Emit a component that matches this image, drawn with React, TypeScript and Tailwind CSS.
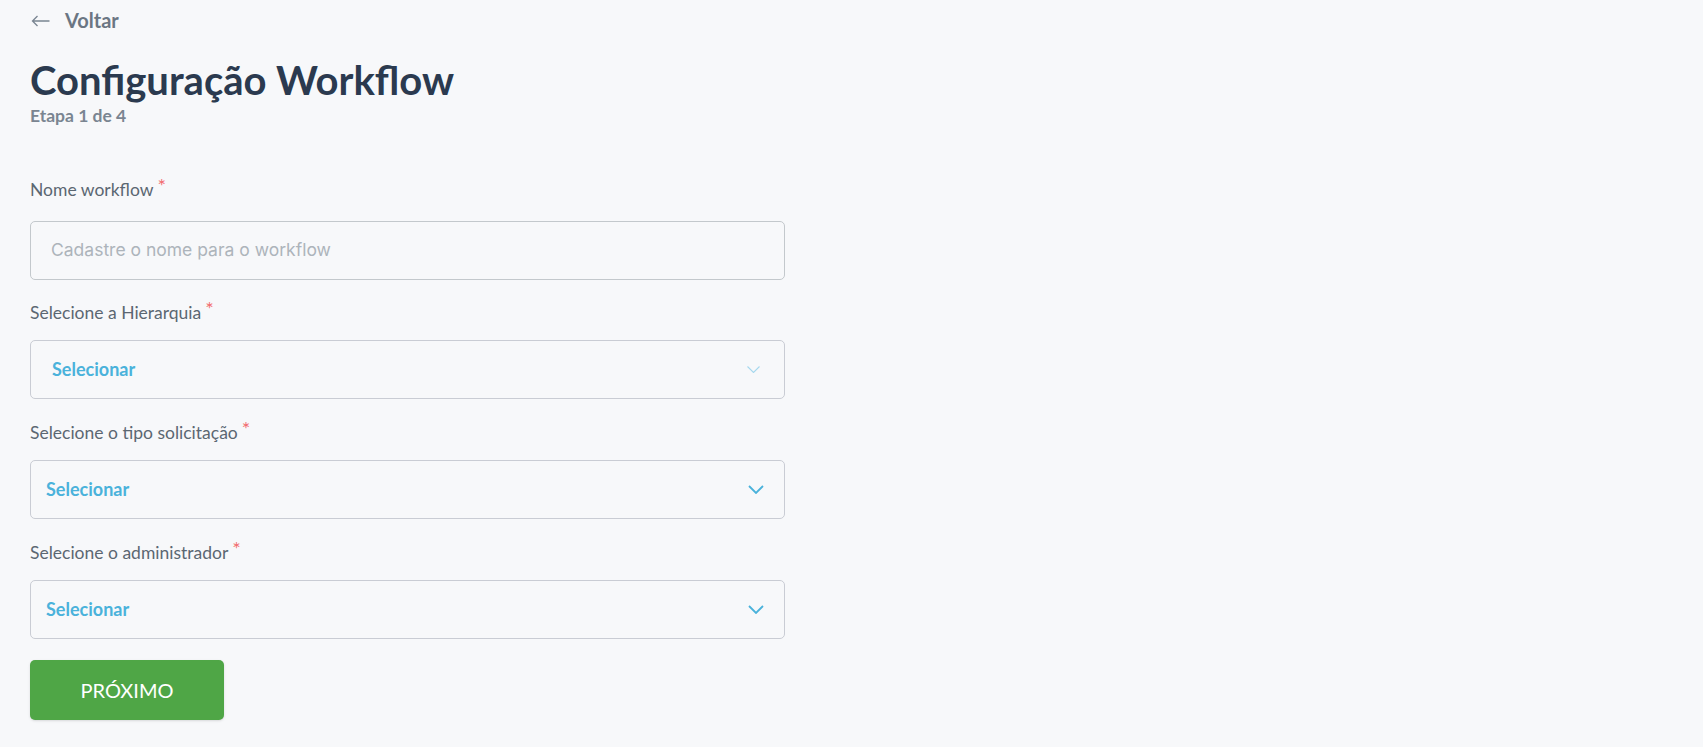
import React from 'react';

const FONT = "font-['Lato','Liberation_Sans',sans-serif]";

const Label = ({ children, className = '' }: { children: React.ReactNode; className?: string }) => (
  <div className={`flex items-start ${className}`}>
    <span className="text-[17.5px] leading-[21px] text-[#5b6772]">{children}</span>
    <span className="relative -top-[4px] ml-[4px] text-[20px] leading-[20px] text-[#f26b6e]">*</span>
  </div>
);

const Chevron = ({ faded }: { faded?: boolean }) =>
  faded ? (
    <svg width="13" height="7" viewBox="0 0 13 7" fill="none">
      <path d="M0.5 0.5l6 6 6-6" stroke="#a6d8ee" strokeWidth="1.1" />
    </svg>
  ) : (
    <svg width="16" height="9" viewBox="0 0 16 9" fill="none">
      <path d="M1 1l7 7 7-7" stroke="#4ab2db" strokeWidth="1.8" />
    </svg>
  );

const Select = ({ first }: { first?: boolean }) => (
  <div
    className={`mt-[17px] h-[59px] w-[755px] rounded-[5px] border border-[#c9ccd4] flex items-center justify-between ${
      first ? 'pl-[21px] pr-[24px]' : 'pl-[15px] pr-[20px]'
    }`}
  >
    <span className="text-[18px] font-bold text-[#4ab2db]">Selecionar</span>
    <Chevron faded={first} />
  </div>
);

export default function App() {
  return (
    <div className={`min-h-screen bg-[#f7f8fa] ${FONT} pl-[30px] pb-[27px]`}>
      <div className="pt-[8px] h-[32px] flex items-start">
        <svg width="19" height="12" viewBox="0 0 19 12" fill="none" className="ml-[1px] mt-[7px]">
          <path d="M18.5 6H1.5M6.5 1L1.5 6l5 5" stroke="#7a8591" strokeWidth="1.3" />
        </svg>
        <span className="ml-[15px] text-[20px] leading-[24px] font-bold text-[#6b7683]">Voltar</span>
      </div>

      <h1 className="mt-[24px] text-[40px] leading-[48px] font-bold text-[#2b3a4f]">
        Configuração Workflow
      </h1>
      <div className="mt-[1px] text-[17.5px] leading-[22px] font-bold text-[#7a8591]">Etapa 1 de 4</div>

      <Label className="mt-[52px]">Nome workflow</Label>
      <div className="mt-[21px] h-[59px] w-[755px] rounded-[5px] border border-[#c3c8cc] flex items-center pl-[20px]">
        <span className="font-['Inter',sans-serif] text-[17.5px] text-[#adb4bb]">
          Cadastre o nome para o workflow
        </span>
      </div>

      <Label className="mt-[22px]">Selecione a Hierarquia</Label>
      <Select first />

      <Label className="mt-[23px]">Selecione o tipo solicitação</Label>
      <Select />

      <Label className="mt-[23px]">Selecione o administrador</Label>
      <Select />

      <button className="mt-[21px] h-[60px] w-[194px] rounded-[5px] bg-[#4fa646] text-white text-[20px] shadow-sm">
        PRÓXIMO
      </button>
    </div>
  );
}
